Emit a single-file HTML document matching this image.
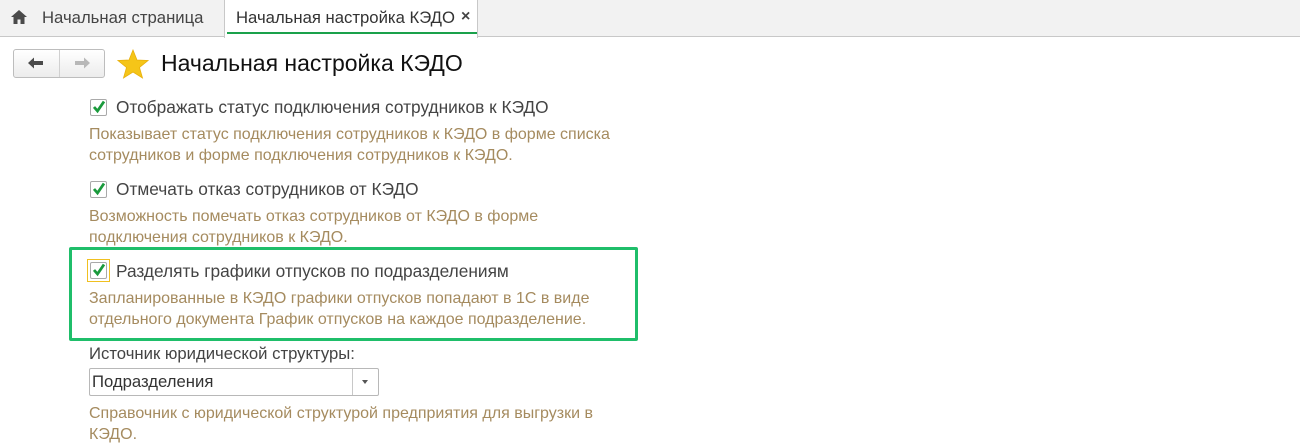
<!DOCTYPE html>
<html><head><meta charset="utf-8"><style>
*{margin:0;padding:0;box-sizing:border-box}
body{width:1300px;height:447px;background:#fff;font-family:"Liberation Sans",Arial,sans-serif;color:#333;position:relative;overflow:hidden}
.abs{position:absolute;white-space:nowrap}
.tabs{position:absolute;left:0;top:0;width:1300px;height:37px;background:#f2f2f2;border-bottom:1px solid #c8c8c8}
.t{font-size:16.7px;color:#444}
.l{font-size:17.3px;color:#444}
.d{font-size:16px;color:#a58b5f;line-height:21px}
.cb{position:absolute;width:17px;height:17px;border:1px solid #a9a9a9;border-radius:2px;background:#fff}
</style></head><body>
<div class="tabs"></div>
<svg class="abs" style="left:10px;top:9px" width="18" height="16" viewBox="0 0 18 16"><path d="M9 1 L1 8 H3.5 V15 H7.5 V10.5 H10.5 V15 H14.5 V8 H17 Z" fill="#4a4a4a"/></svg>
<div class="abs t" style="left:42px;top:8px">Начальная страница</div>
<div class="abs" style="left:224px;top:0;width:254px;height:38px;background:#fff;border-left:1px solid #c8c8c8;border-right:1px solid #c8c8c8"></div>
<div class="abs t" style="left:236px;top:8px;color:#333">Начальная настройка КЭДО</div>
<div class="abs" style="left:461px;top:8px;font-size:16px;color:#444;font-weight:bold">×</div>
<div class="abs" style="left:227px;top:32px;width:250px;height:2px;background:#1aa14b"></div>

<div class="abs" style="left:13px;top:49px;width:92px;height:29px;border:1px solid #bdbdbd;border-radius:3px;background:linear-gradient(#fff,#ececec)"></div>
<div class="abs" style="left:59px;top:50px;width:1px;height:27px;background:#d0d0d0"></div>
<svg class="abs" style="left:27px;top:56px" width="18" height="14" viewBox="0 0 18 14"><path d="M1 7 L7 1.5 V5 H16 V9 H7 V12.5 Z" fill="#4a4a4a"/></svg>
<svg class="abs" style="left:73px;top:56px" width="18" height="14" viewBox="0 0 18 14"><path d="M17 7 L11 1.5 V5 H2 V9 H11 V12.5 Z" fill="#b8b8b8"/></svg>
<svg class="abs" style="left:117px;top:49px" width="32" height="30" viewBox="0 0 32 30"><path d="M16 1 L20 11 L31 11.5 L22.5 18.5 L25.5 29 L16 23 L6.5 29 L9.5 18.5 L1 11.5 L12 11 Z" fill="#f5c518" stroke="#e8b00c" stroke-width="0.8"/></svg>
<div class="abs" style="left:161px;top:50px;font-size:23px;color:#111">Начальная настройка КЭДО</div>

<div class="cb" style="left:90px;top:99px"></div>
<svg class="abs" style="left:91px;top:99px" width="16" height="16" viewBox="0 0 16 16"><path d="M3 8 L6.5 12 L13 2.5" fill="none" stroke="#1a9a3c" stroke-width="2.8"/></svg>
<div class="abs l" style="left:116px;top:97px">Отображать статус подключения сотрудников к КЭДО</div>
<div class="abs d" style="left:89px;top:124px">Показывает статус подключения сотрудников к КЭДО в форме списка<br>сотрудников и форме подключения сотрудников к КЭДО.</div>

<div class="cb" style="left:90px;top:181px"></div>
<svg class="abs" style="left:91px;top:181px" width="16" height="16" viewBox="0 0 16 16"><path d="M3 8 L6.5 12 L13 2.5" fill="none" stroke="#1a9a3c" stroke-width="2.8"/></svg>
<div class="abs l" style="left:116px;top:179px">Отмечать отказ сотрудников от КЭДО</div>
<div class="abs d" style="left:89px;top:206px">Возможность помечать отказ сотрудников от КЭДО в форме<br>подключения сотрудников к КЭДО.</div>

<div class="abs" style="left:69px;top:247px;width:569px;height:94px;border:3px solid #1fbe6a;border-radius:2px"></div>
<div class="abs" style="left:87px;top:259px;width:23px;height:23px;border:1px solid #f0c020"></div>
<div class="cb" style="left:90px;top:262px"></div>
<svg class="abs" style="left:91px;top:262px" width="16" height="16" viewBox="0 0 16 16"><path d="M3 8 L6.5 12 L13 2.5" fill="none" stroke="#1a9a3c" stroke-width="2.8"/></svg>
<div class="abs l" style="left:116px;top:261px">Разделять графики отпусков по подразделениям</div>
<div class="abs d" style="left:89px;top:288px">Запланированные в КЭДО графики отпусков попадают в 1С в виде<br>отдельного документа График отпусков на каждое подразделение.</div>

<div class="abs t" style="left:89px;top:344px">Источник юридической структуры:</div>
<div class="abs" style="left:89px;top:368px;width:290px;height:28px;border:1px solid #b8b8b8;border-radius:2px;background:#fff"></div>
<div class="abs" style="left:352px;top:369px;width:1px;height:26px;background:#c8c8c8"></div>
<div class="abs" style="left:362px;top:380px;width:0;height:0;border-left:3.5px solid transparent;border-right:3.5px solid transparent;border-top:4px solid #555"></div>
<div class="abs t" style="left:92px;top:372px;color:#333">Подразделения</div>
<div class="abs d" style="left:89px;top:403px">Справочник с юридической структурой предприятия для выгрузки в<br>КЭДО.</div>
</body></html>
